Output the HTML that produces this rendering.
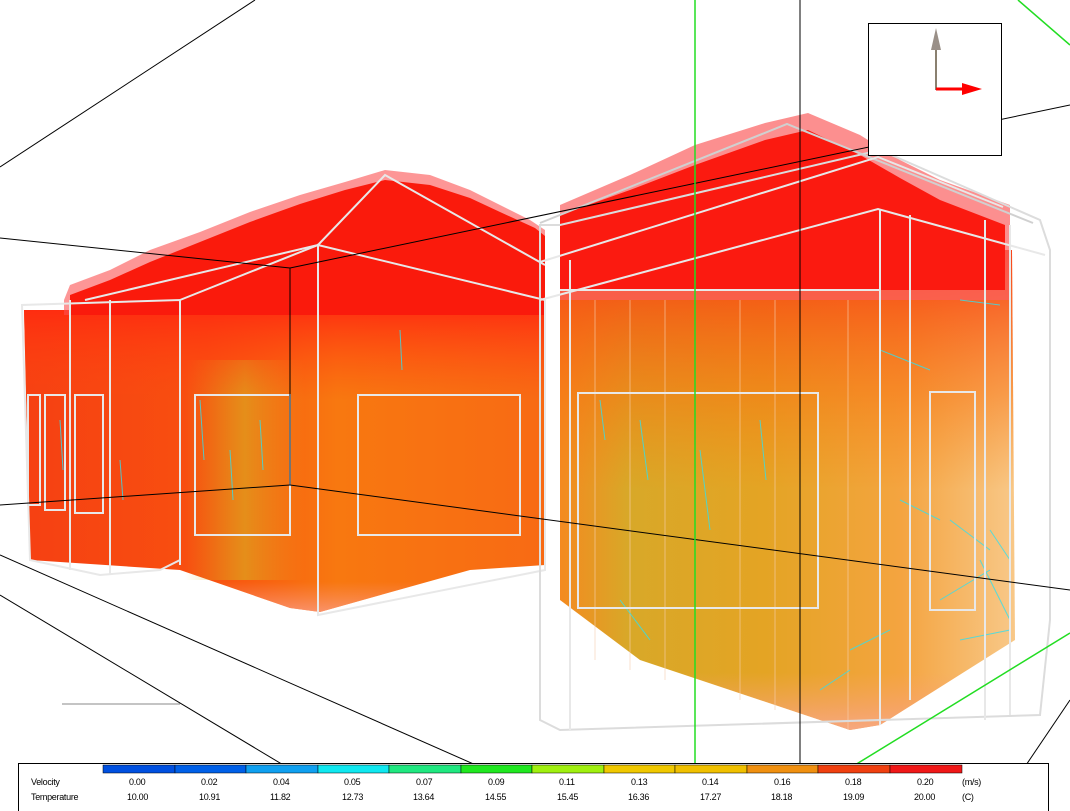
<!DOCTYPE html>
<html><head><style>
body{margin:0;width:1070px;height:811px;overflow:hidden;background:#fff;font-family:"Liberation Sans",sans-serif}
svg{position:absolute;left:0;top:0}
.lg{position:absolute;font-size:9px;color:#000;letter-spacing:-0.3px}
</style></head><body>
<svg width="1070" height="811" viewBox="0 0 1070 811">
<defs>
<linearGradient id="lb" x1="0" y1="0" x2="1" y2="0"><stop offset="0" stop-color="#f64012"/><stop offset="0.35" stop-color="#f85010"/><stop offset="0.6" stop-color="#f87810"/><stop offset="1" stop-color="#f86a14"/></linearGradient>
<linearGradient id="lv" x1="0" y1="0" x2="0" y2="1"><stop offset="0" stop-color="#ff2a10" stop-opacity="0.9"/><stop offset="0.3" stop-color="#ff4a10" stop-opacity="0"/><stop offset="0.9" stop-color="#fa9070" stop-opacity="0"/><stop offset="1" stop-color="#fa9a80" stop-opacity="0.8"/></linearGradient>
<linearGradient id="lc" x1="0" y1="0" x2="1" y2="0"><stop offset="0" stop-color="#d8b020" stop-opacity="0"/><stop offset="0.5" stop-color="#d8b020"/><stop offset="1" stop-color="#e8a020" stop-opacity="0"/></linearGradient>
<linearGradient id="rb" x1="0" y1="0" x2="1" y2="0"><stop offset="0" stop-color="#f48a20"/><stop offset="0.15" stop-color="#d8a828"/><stop offset="0.45" stop-color="#e4a424"/><stop offset="0.75" stop-color="#f4a440"/><stop offset="1" stop-color="#f8c888"/></linearGradient>
<linearGradient id="rv" x1="0" y1="0" x2="0" y2="1"><stop offset="0" stop-color="#f83c14" stop-opacity="0.95"/><stop offset="0.3" stop-color="#f87010" stop-opacity="0.5"/><stop offset="0.5" stop-color="#f88010" stop-opacity="0"/><stop offset="0.88" stop-color="#f8a070" stop-opacity="0"/><stop offset="1" stop-color="#f8a888" stop-opacity="0.9"/></linearGradient>
</defs>
<!-- left building -->
<polygon points="24,310 545,310 545,565 470,570 320,612 290,608 180,570 30,560" fill="url(#lb)"/>
<rect x="185" y="360" width="120" height="220" fill="url(#lc)" opacity="0.6"/>
<polygon points="24,310 545,310 545,565 470,570 320,612 290,608 180,570 30,560" fill="url(#lv)"/>
<polygon points="64,300 70,285 110,270 150,250 200,232 250,212 300,195 345,182 385,170 430,175 470,190 500,205 530,220 545,230 545,315 64,315" fill="#fb5050" opacity="0.6"/>
<polygon points="70,315 70,295 110,280 150,262 200,242 250,222 300,204 345,190 385,180 430,185 470,198 500,212 535,228 545,236 545,315" fill="#fa1a0c"/>
<!-- right building -->
<polygon points="560,250 1012,250 1015,640 880,725 850,730 640,660 560,600" fill="url(#rb)"/>
<polygon points="560,250 1012,250 1015,640 880,725 850,730 640,660 560,600" fill="url(#rv)"/>
<polygon points="560,290 560,205 630,175 695,145 765,123 808,113 860,135 900,160 940,180 1010,205 1010,300 560,300" fill="#fb6060" opacity="0.7"/>
<polygon points="560,290 560,215 630,190 695,165 765,140 808,130 860,155 900,178 940,200 1005,225 1005,290" fill="#fb1a10"/>
<g stroke="#f8d0b0" stroke-width="1" opacity="0.6">
<line x1="595" y1="300" x2="595" y2="660"/><line x1="630" y1="300" x2="630" y2="670"/><line x1="665" y1="300" x2="665" y2="680"/><line x1="740" y1="300" x2="740" y2="700"/><line x1="775" y1="300" x2="775" y2="710"/><line x1="848" y1="300" x2="848" y2="730"/>
</g>
<g fill="none" stroke="#30e0f0" stroke-width="1" opacity="0.8">
<path d="M600 400 l5 40 M640 420 l8 60 M700 450 l10 80 M760 420 l6 60 M900 500 l40 20 M950 520 l40 30 M980 560 l30 60 M620 600 l30 40 M850 650 l40 -20 M200 400 l4 60 M230 450 l3 50 M260 420 l3 50 M60 420 l3 50 M120 460 l3 40 M400 330 l2 40 M960 300 l40 5 M880 350 l50 20 M940 600 l50 -30 M960 640 l50 -10 M820 690 l30 -20 M990 530 l20 30"/>
</g>
<!-- white frames -->
<g fill="none" stroke="#e8e8e8" stroke-width="2">
<polygon points="22,305 30,560 100,575 160,570 180,560 180,300"/>
<line x1="70" y1="300" x2="70" y2="570"/><line x1="110" y1="300" x2="110" y2="575"/>
<polygon points="318,245 318,615 545,570 545,300"/>
<polyline points="180,300 318,245 385,175 545,265"/>
<line x1="85" y1="300" x2="318" y2="245"/>
<line x1="180" y1="300" x2="180" y2="565"/>
<rect x="195" y="395" width="95" height="140"/>
<rect x="358" y="395" width="162" height="140"/>
<rect x="28" y="395" width="12" height="110"/><rect x="45" y="395" width="20" height="115"/><rect x="75" y="395" width="28" height="118"/>
<polygon points="540,225 540,720 560,730 1040,715 1050,620 1050,250 1040,220 880,150 560,225" stroke="#dcdcdc"/>
<polyline points="540,223 787,124 1033,223" stroke="#d0d0d0"/>
<polyline points="540,262 878,157 1003,207"/>
<polyline points="540,300 878,209 1045,255"/>
<line x1="570" y1="260" x2="570" y2="730"/>
<line x1="880" y1="210" x2="880" y2="725"/>
<rect x="578" y="393" width="240" height="215"/>
<rect x="930" y="392" width="45" height="218"/>
<line x1="910" y1="215" x2="910" y2="700"/><line x1="985" y1="220" x2="985" y2="720"/><line x1="1010" y1="225" x2="1010" y2="715"/>
<line x1="560" y1="290" x2="880" y2="290"/>
</g>
<!-- black lines -->
<g stroke="#000" stroke-width="1" fill="none">
<line x1="0" y1="167" x2="255" y2="0"/>
<line x1="0" y1="238" x2="290" y2="268"/>
<line x1="290" y1="268" x2="1070" y2="105"/>
<line x1="290" y1="268" x2="290" y2="485"/>
<line x1="0" y1="505" x2="290" y2="485"/>
<line x1="290" y1="485" x2="1070" y2="590"/>
<line x1="0" y1="595" x2="360" y2="811"/>
<line x1="0" y1="555" x2="580" y2="811"/>
<line x1="800" y1="0" x2="800" y2="811"/>
<line x1="62" y1="704" x2="180" y2="704" stroke="#888"/>
<line x1="1070" y1="700" x2="995" y2="811"/>
</g>
<g stroke="#22dd22" stroke-width="1.5" fill="none">
<line x1="695" y1="0" x2="695" y2="811"/>
<line x1="1018" y1="0" x2="1070" y2="45"/>
<line x1="1070" y1="633" x2="780" y2="811"/>
</g>
<!-- axis box -->
<rect x="868.5" y="23.5" width="133" height="132" fill="#fff" stroke="#000"/>
<line x1="936" y1="50" x2="936" y2="90" stroke="#8a8070" stroke-width="2"/>
<polygon points="931,50 936,28 941,50" fill="#9a9088"/>
<line x1="936" y1="89" x2="965" y2="89" stroke="#f00" stroke-width="3"/>
<polygon points="962,83 982,89 962,95" fill="#f00"/>
<!-- legend -->
<rect x="18.5" y="763.5" width="1030" height="50" fill="#fff" stroke="#000"/>
<g stroke="#000" stroke-width="0.5">
<rect x="103" y="765" width="72" height="8" fill="#0050e0"/>
<rect x="175" y="765" width="71" height="8" fill="#0060e8"/>
<rect x="246" y="765" width="72" height="8" fill="#10a0f0"/>
<rect x="318" y="765" width="71" height="8" fill="#10e8f0"/>
<rect x="389" y="765" width="72" height="8" fill="#20e880"/>
<rect x="461" y="765" width="71" height="8" fill="#20e820"/>
<rect x="532" y="765" width="72" height="8" fill="#a0f010"/>
<rect x="604" y="765" width="71" height="8" fill="#f0c800"/>
<rect x="675" y="765" width="72" height="8" fill="#f0c000"/>
<rect x="747" y="765" width="71" height="8" fill="#f09010"/>
<rect x="818" y="765" width="72" height="8" fill="#f04010"/>
<rect x="890" y="765" width="72" height="8" fill="#f01818"/>
</g>
</svg>
<div class="lg" style="left:31px;top:777px">Velocity</div>
<div class="lg" style="left:31px;top:792px">Temperature</div>
<div class="lg" style="left:129px;top:777px">0.00</div><div class="lg" style="left:201px;top:777px">0.02</div><div class="lg" style="left:273px;top:777px">0.04</div><div class="lg" style="left:344px;top:777px">0.05</div><div class="lg" style="left:416px;top:777px">0.07</div><div class="lg" style="left:488px;top:777px">0.09</div><div class="lg" style="left:559px;top:777px">0.11</div><div class="lg" style="left:631px;top:777px">0.13</div><div class="lg" style="left:702px;top:777px">0.14</div><div class="lg" style="left:774px;top:777px">0.16</div><div class="lg" style="left:845px;top:777px">0.18</div><div class="lg" style="left:917px;top:777px">0.20</div><div class="lg" style="left:962px;top:777px">(m/s)</div>
<div class="lg" style="left:127px;top:792px">10.00</div><div class="lg" style="left:199px;top:792px">10.91</div><div class="lg" style="left:270px;top:792px">11.82</div><div class="lg" style="left:342px;top:792px">12.73</div><div class="lg" style="left:413px;top:792px">13.64</div><div class="lg" style="left:485px;top:792px">14.55</div><div class="lg" style="left:557px;top:792px">15.45</div><div class="lg" style="left:628px;top:792px">16.36</div><div class="lg" style="left:700px;top:792px">17.27</div><div class="lg" style="left:771px;top:792px">18.18</div><div class="lg" style="left:843px;top:792px">19.09</div><div class="lg" style="left:914px;top:792px">20.00</div><div class="lg" style="left:962px;top:792px">(C)</div>
</body></html>
